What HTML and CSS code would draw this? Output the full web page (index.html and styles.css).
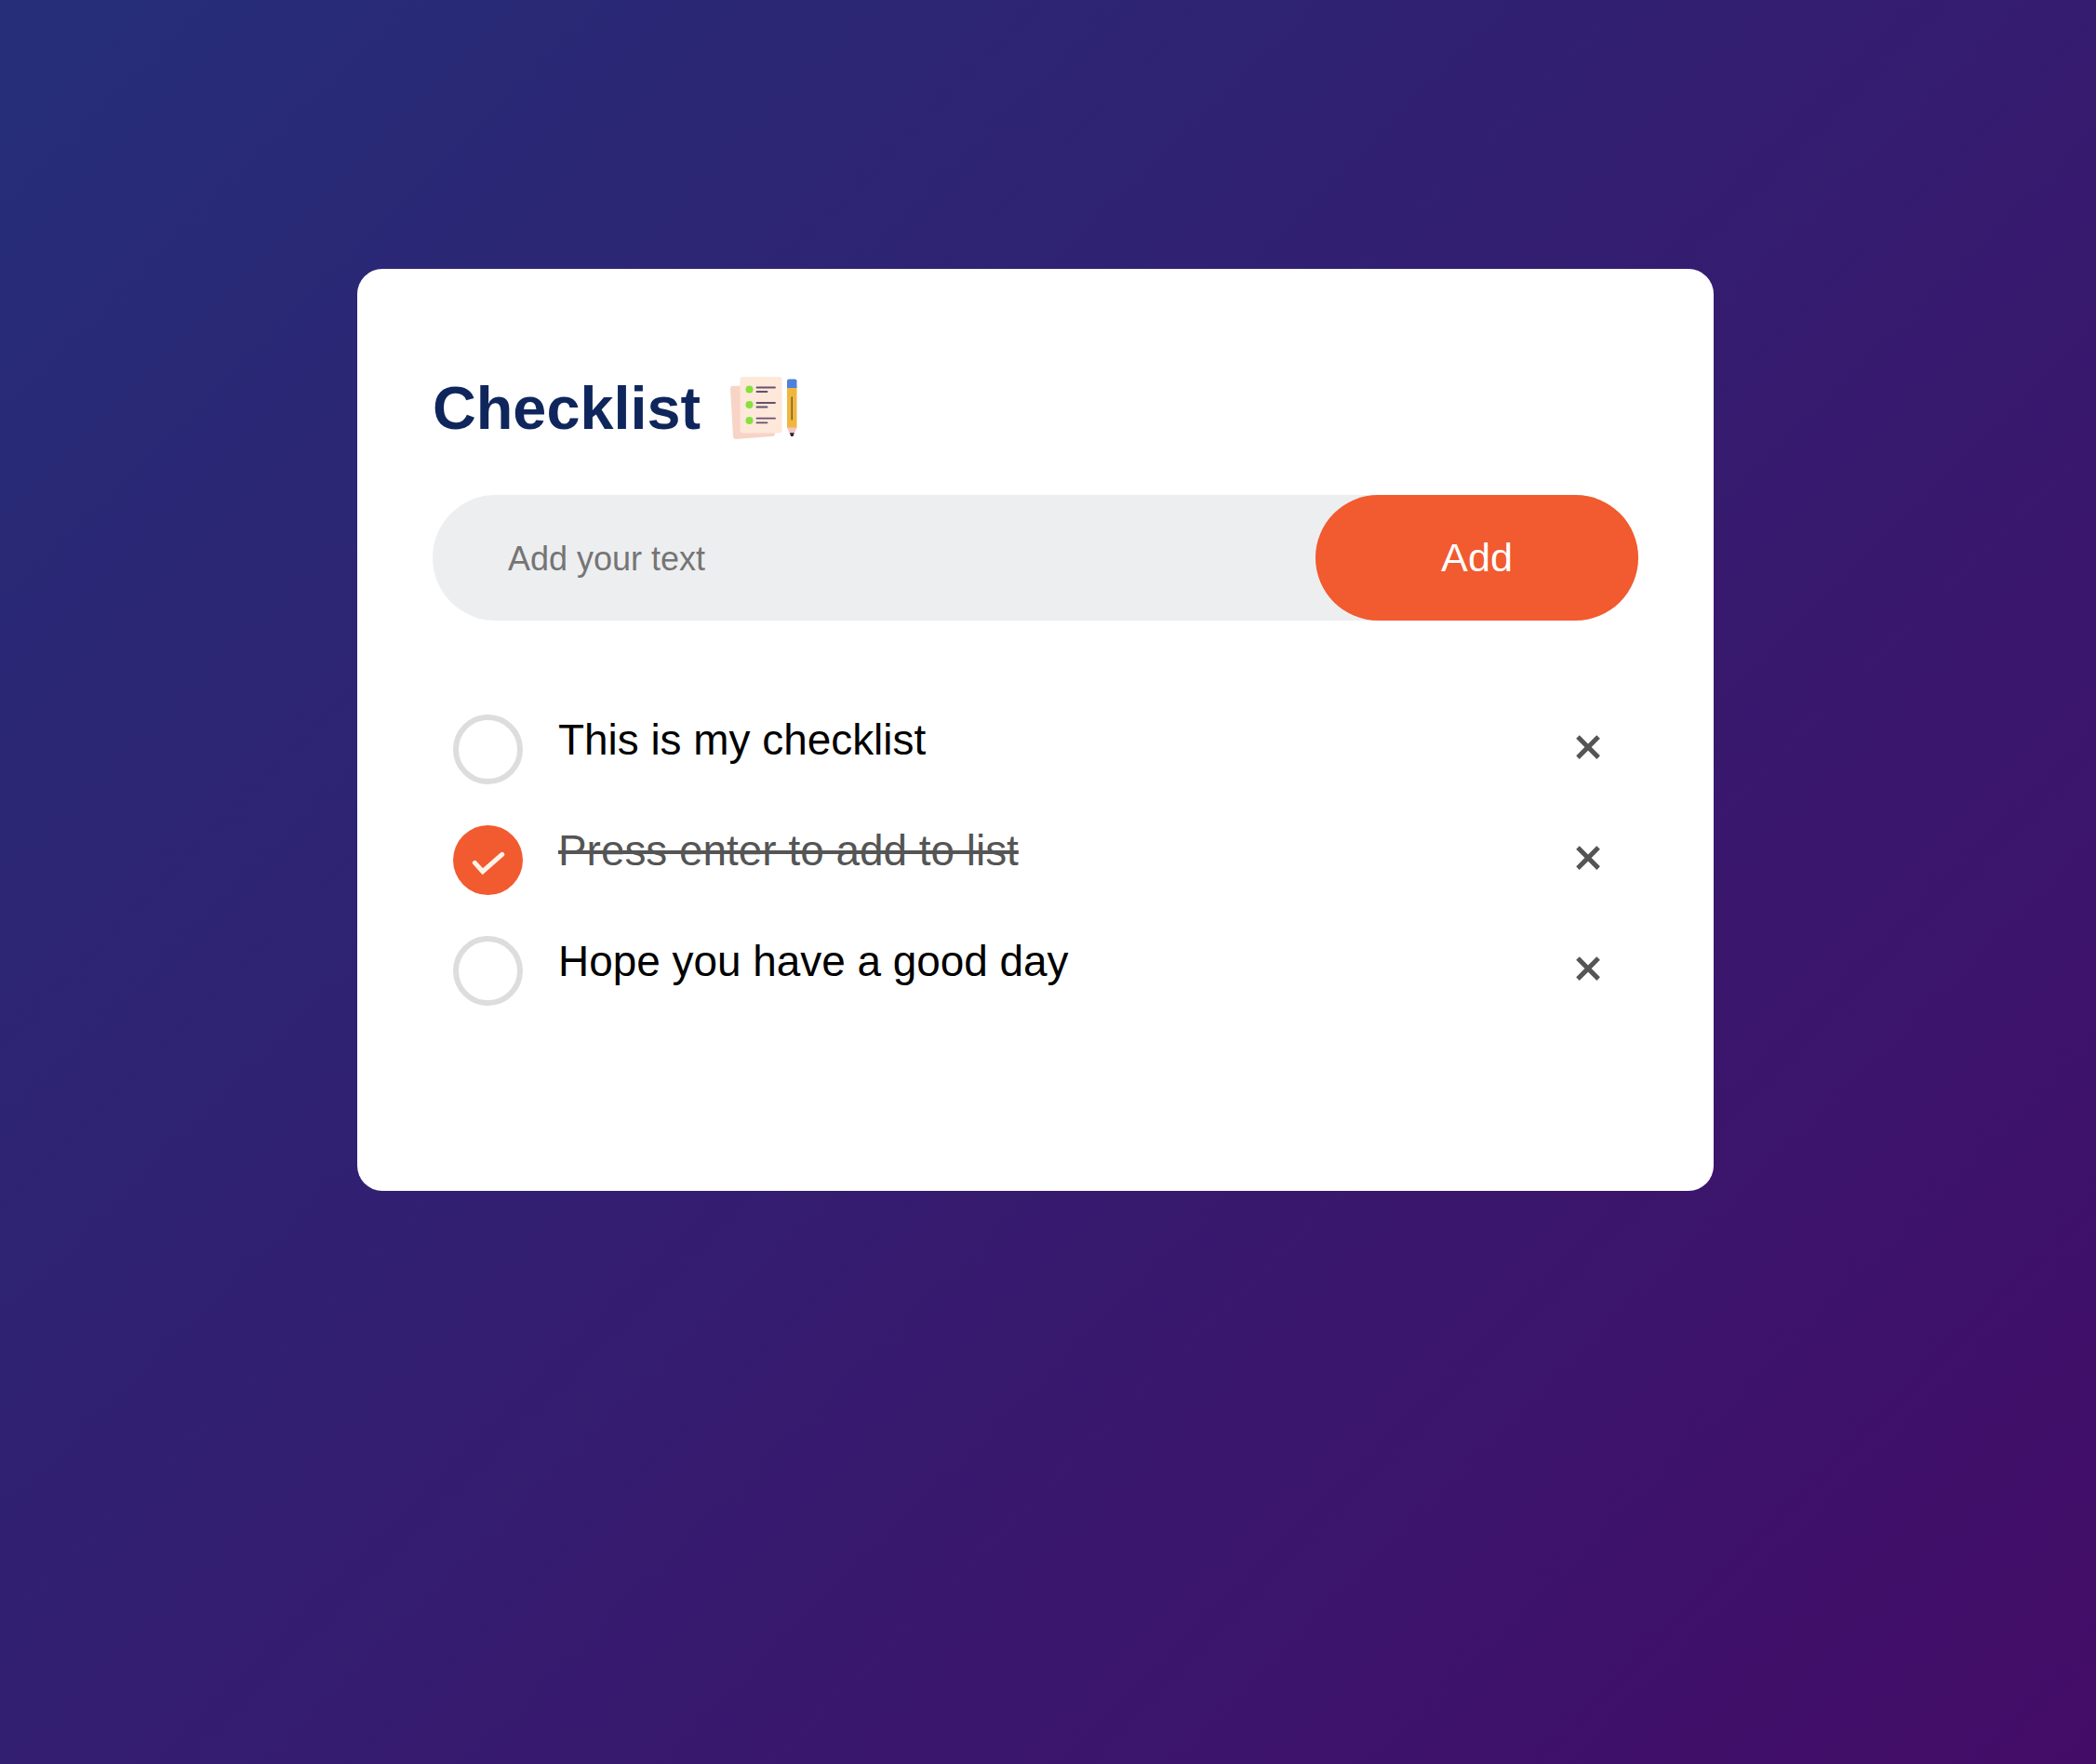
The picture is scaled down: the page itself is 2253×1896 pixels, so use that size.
FILE: index.html
```html
<!DOCTYPE html>
<html lang="en">
<head>
<meta charset="utf-8">
<title>Checklist</title>
<link rel="stylesheet" href="styles.css">
</head>
<body>
<main class="card">
  <h1 class="title">Checklist
    <svg class="title-icon" viewBox="0 0 81 81" aria-hidden="true">
      <path d="M6 20 Q4 20 4 23 L7 74 Q7 77 10 77 L49 74 Q52 74 52 71 L46 18Z" fill="#f7d4c6"/>
      <rect x="14.500" y="10" width="45" height="60.500" rx="3" fill="#fde8da"/>
      <g fill="#84e23b"><circle cx="24.500" cy="23.500" r="4"/><circle cx="24.500" cy="40" r="4"/><circle cx="24.500" cy="57" r="4"/></g>
      <g stroke="#66506c" stroke-width="1.800" stroke-linecap="round"><path d="M32.500 21.500H52M32.500 26H43.500M32.500 38H52M32.500 42.500H43.500M32.500 54.700H52M32.500 59.300H43.500"/></g>
      <path d="M65 20H75.500V65H65Z" fill="#efb73e"/>
      <path d="M65 22V14.500Q65 12.500 67 12.500H73.500Q75.500 12.500 75.500 14.500V22Z" fill="#4c82d9"/>
      <path d="M65 64.500H75.500L73 70.500H67.500Z" fill="#f5c5c1"/>
      <path d="M67.800 70.200H72.800L71.500 74H69.200Z" fill="#2b2230"/>
      <path d="M70.200 32V56" stroke="#70502a" stroke-width="1.300" stroke-linecap="round"/>
    </svg>
  </h1>
  <form class="entry">
    <input class="entry-input" type="text" placeholder="Add your text">
    <button class="entry-add" type="button">Add</button>
  </form>
  <ul class="list">
    <li class="item"><span class="check"></span><span class="label">This is my checklist</span><span class="remove">×</span></li>
    <li class="item done"><span class="check"><svg class="tick" viewBox="0 0 76 76" aria-hidden="true"><path d="M23.500 40.500L32 50L53 31.500"/></svg></span><span class="label">Press enter to add to list</span><span class="remove">×</span></li>
    <li class="item"><span class="check"></span><span class="label">Hope you have a good day</span><span class="remove">×</span></li>
  </ul>
</main>
</body>
</html>
```
FILE: styles.css
```css
* {
  box-sizing: border-box;
  margin: 0;
  padding: 0;
  font-family: "Liberation Sans", Arial, sans-serif;
}

body {
  min-height: 100vh;
  display: flex;
  align-items: flex-start;
  padding: 289px 0 0 384px;
  background: linear-gradient(135deg, #252e79, #430c67);
}

.card {
  width: 1458px;
  height: 991px;
  padding: 108px 81px 0;
  border-radius: 27px;
  background: #fff;
}

.title {
  display: flex;
  align-items: center;
  gap: 28px;
  height: 81px;
  padding-top: 1px;
  margin-bottom: 54px;
  color: #0f265c;
  font-size: 64.8px;
}

.title-icon {
  width: 81px;
  height: 81px;
  margin-bottom: 6px;
}

.entry {
  display: flex;
  height: 135px;
  margin-bottom: 68.5px;
  padding-left: 54px;
  border-radius: 81px;
  background: #edeef0;
}

.entry-input {
  flex: 1;
  min-width: 0;
  padding: 29px 27px 27px;
  border: 0;
  outline: 0;
  background: transparent;
  font-size: 36px;
}

.entry-input::placeholder {
  color: #757575;
}

.entry-add {
  width: 347px;
  border: 0;
  border-radius: 108px;
  background: #f25a2f;
  color: #fff;
  font-size: 43.2px;
}

.list {
  list-style: none;
}

.item {
  display: flex;
  align-items: flex-start;
  height: 119px;
  padding-left: 21.6px;
  font-size: 45.9px;
}

.check {
  width: 75.6px;
  height: 75.6px;
  margin-top: 32.4px;
  border: 6px solid #ddd;
  border-radius: 50%;
}

.label {
  flex: 1;
  margin: 32.4px 0 0 37.8px;
  line-height: 54px;
}

.done .check {
  border: 0;
  background: #f25a2f;
}

.done .label {
  color: #555;
  text-decoration: line-through;
  text-decoration-thickness: 4px;
}

.tick {
  display: block;
  width: 100%;
  height: 100%;
  fill: none;
  stroke: #fff3e8;
  stroke-width: 5;
  stroke-linecap: round;
}

.remove {
  width: 108px;
  margin-top: 12.5px;
  color: #555;
  font-size: 54px;
  line-height: 108px;
  text-align: center;
  -webkit-text-stroke: 1.2px #555;
}
```
